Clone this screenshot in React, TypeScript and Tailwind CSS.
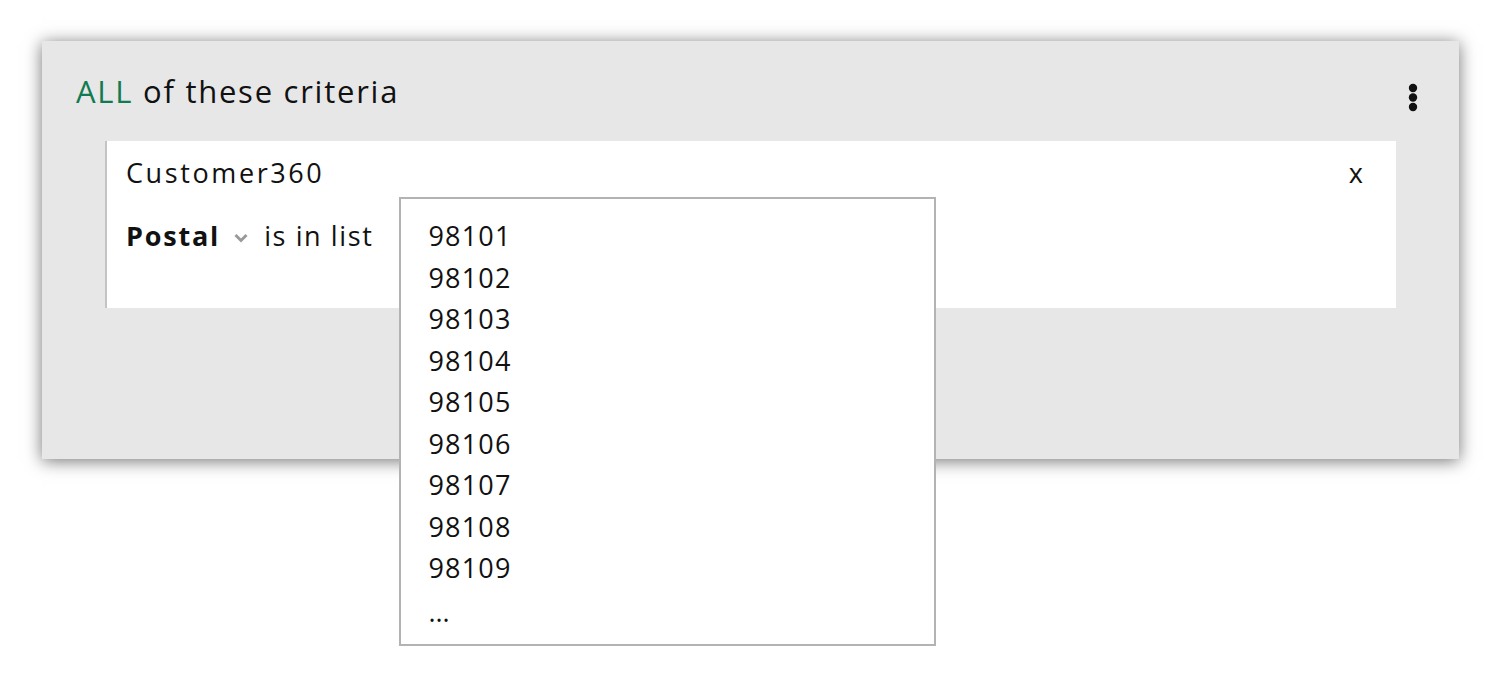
import React from "react";

const codes = ["98101", "98102", "98103", "98104", "98105", "98106", "98107", "98108", "98109"];

function Kebab() {
  return (
    <svg width="10" height="30" viewBox="0 0 10 30" className="block">
      <circle cx="5" cy="5" r="4.2" fill="#111" />
      <circle cx="5" cy="14.5" r="4.2" fill="#111" />
      <circle cx="5" cy="24" r="4.2" fill="#111" />
    </svg>
  );
}

function Chevron() {
  return (
    <svg width="16" height="10" viewBox="0 0 16 10" className="block">
      <path d="M2.5 2 L8 7.5 L13.5 2" fill="none" stroke="#9a9a9a" strokeWidth="3" />
    </svg>
  );
}

export default function App() {
  return (
    <div
      className="w-[1501px] h-[677px] bg-white pt-[41px] pl-[42px] text-[#111]"
      style={{ fontFamily: '"Open Sans", "Noto Sans", sans-serif' }}
    >
      <div className="w-[1417px] h-[418px] bg-[#e7e7e7] shadow-[0_2px_16px_rgba(0,0,0,0.55)]">
        <div className="flex items-start justify-between pl-[34px] pr-[41px] pt-[28px] h-[100px]">
          <div className="text-[31px] leading-[44px] tracking-[1.75px]">
            <span className="text-[#117a50]">ALL</span> of these criteria
          </div>
          <div className="pt-[14px]">
            <Kebab />
          </div>
        </div>
        <div className="mx-[63px] h-[167px] bg-white border-l-2 border-[#c4c4c4] pl-[19px] pr-[33px]">
          <div className="flex items-center justify-between h-[64px]">
            <span className="text-[27px] tracking-[2.6px]">Customer360</span>
            <span className="text-[27px]">x</span>
          </div>
          <div className="flex items-center h-[62px]">
            <span className="text-[27px] font-bold tracking-[1.8px]">Postal</span>
            <span className="ml-[13px] mr-[15px] pt-[4px]">
              <Chevron />
            </span>
            <span className="text-[27px] tracking-[1.6px]">is in list</span>
            <div className="relative ml-[26px] self-start">
              <div className="absolute left-0 top-[-8px] w-[537px] h-[449px] bg-white border-2 border-[#b3b3b3] pl-[27px] pt-[16px]">
                {codes.map((c) => (
                  <div key={c} className="text-[27px] leading-[41.5px] tracking-[1.2px]">
                    {c}
                  </div>
                ))}
                <div className="text-[27px] leading-[41.5px] mt-[2px]">...</div>
              </div>
            </div>
          </div>
        </div>
      </div>
    </div>
  );
}
